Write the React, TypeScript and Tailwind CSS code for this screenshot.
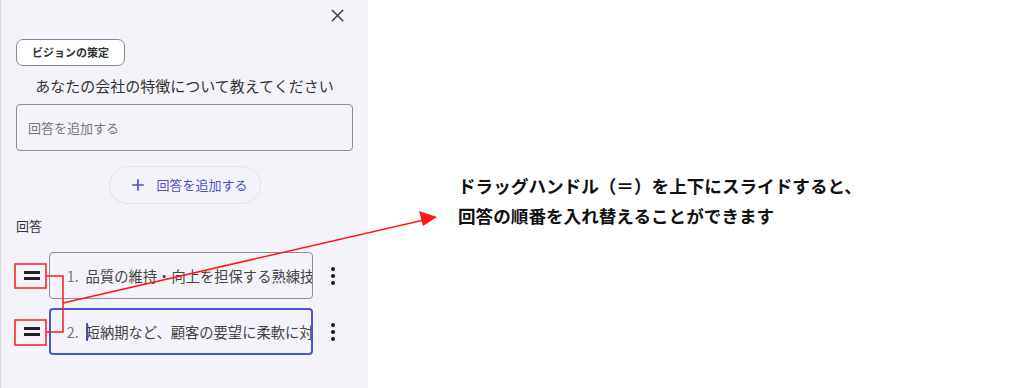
import { Plus, X } from 'lucide-react';

const font = { fontFamily: '"Noto Sans CJK JP", "Noto Sans", sans-serif' };

const answers = [
  { no: 1, text: '品質の維持・向上を担保する熟練技術者の存在', active: false },
  { no: 2, text: '短納期など、顧客の要望に柔軟に対応できる体制', active: true },
];

function DragHandle() {
  return (
    <div className="flex w-[33px] flex-col items-center justify-center gap-[3px]">
      <div className="h-[3px] w-[16px] bg-[#222]" />
      <div className="h-[3px] w-[16px] bg-[#222]" />
    </div>
  );
}

function Kebab() {
  return (
    <div className="flex w-[40px] flex-col items-center gap-[3px]">
      <div className="h-[4px] w-[4px] rounded-full bg-[#111]" />
      <div className="h-[4px] w-[4px] rounded-full bg-[#111]" />
      <div className="h-[4px] w-[4px] rounded-full bg-[#111]" />
    </div>
  );
}

export default function App() {
  return (
    <div className="relative flex h-[388px] w-[1024px] overflow-hidden bg-white" style={font}>
      {/* side panel */}
      <div className="flex w-[368px] flex-col border-l border-[#d8d7de] bg-[#f4f3fa] px-[15px]">
        <div className="flex justify-end pt-[5px] pr-[5px]">
          <X size={21} strokeWidth={1.8} className="text-[#444]" />
        </div>

        <div className="mt-[13px] flex">
          <div className="flex h-[27px] items-center rounded-[7px] border border-[#8a8990] bg-white px-[15px] text-[11px] font-bold text-[#333]">
            ビジョンの策定
          </div>
        </div>

        <div className="mt-[8px] text-center text-[15px] leading-[24px] text-[#333]">
          あなたの会社の特徴について教えてください
        </div>

        <div className="mt-[6px] flex h-[47px] items-center rounded-[4px] border border-[#8f8e96] px-[11px] text-[13px] text-[#777]">
          回答を追加する
        </div>

        <div className="mt-[15px] flex justify-center">
          <div className="flex h-[38px] w-[152px] items-center gap-[10px] rounded-full border border-[#e3e1ee] pl-[19px] text-[13px] text-[#4a52c4]">
            <Plus size={18} strokeWidth={2.2} />
            <span>回答を追加する</span>
          </div>
        </div>

        <div className="mt-[13px] text-[13px] leading-[18px] text-[#333]">回答</div>

        <div className="mt-[17px] flex flex-col gap-[9px]">
          {answers.map((a) => (
            <div key={a.no} className="flex items-center">
              <DragHandle />
              <div
                className={
                  a.active
                    ? 'flex h-[47px] w-[267px] items-center overflow-hidden whitespace-nowrap rounded-[4px] border-2 border-[#4b55d2] pl-[16px] text-[14.3px] text-[#444]'
                    : 'flex h-[47px] w-[267px] items-center overflow-hidden whitespace-nowrap rounded-[4px] border border-[#8f8e96] pl-[17px] text-[14.3px] text-[#444]'
                }
              >
                <span className="mr-[7px] shrink-0 text-[#777]">{a.no}.</span>
                {a.active && <span className="-mr-[2px] h-[18px] w-[2px] shrink-0 bg-[#4b55d2]" />}
                <span className="shrink-0">{a.text}</span>
              </div>
              <Kebab />
            </div>
          ))}
        </div>
      </div>

      {/* annotation */}
      <div className="flex-1 pl-[90px] pt-[171px]">
        <div className="text-[17.6px] font-bold leading-[30px] text-[#111]">
          <div>ドラッグハンドル（＝）を上下にスライドすると、</div>
          <div>回答の順番を入れ替えることができます</div>
        </div>
      </div>

      {/* red markup overlay */}
      <svg className="pointer-events-none absolute left-0 top-0" width="1024" height="388">
        <rect x="15" y="264" width="31" height="24" fill="none" stroke="#ff1a1a" strokeWidth="1.5" />
        <rect x="15" y="320" width="31" height="25" fill="none" stroke="#ff1a1a" strokeWidth="1.5" />
        <polyline points="46,276 63,276 63,332 46,332" fill="none" stroke="#ff1a1a" strokeWidth="1.5" />
        <line x1="63" y1="303" x2="424" y2="220" stroke="#ff1a1a" strokeWidth="1.5" />
        <polygon points="437,217 419,211 423,226" fill="#ff1a1a" />
      </svg>
    </div>
  );
}
